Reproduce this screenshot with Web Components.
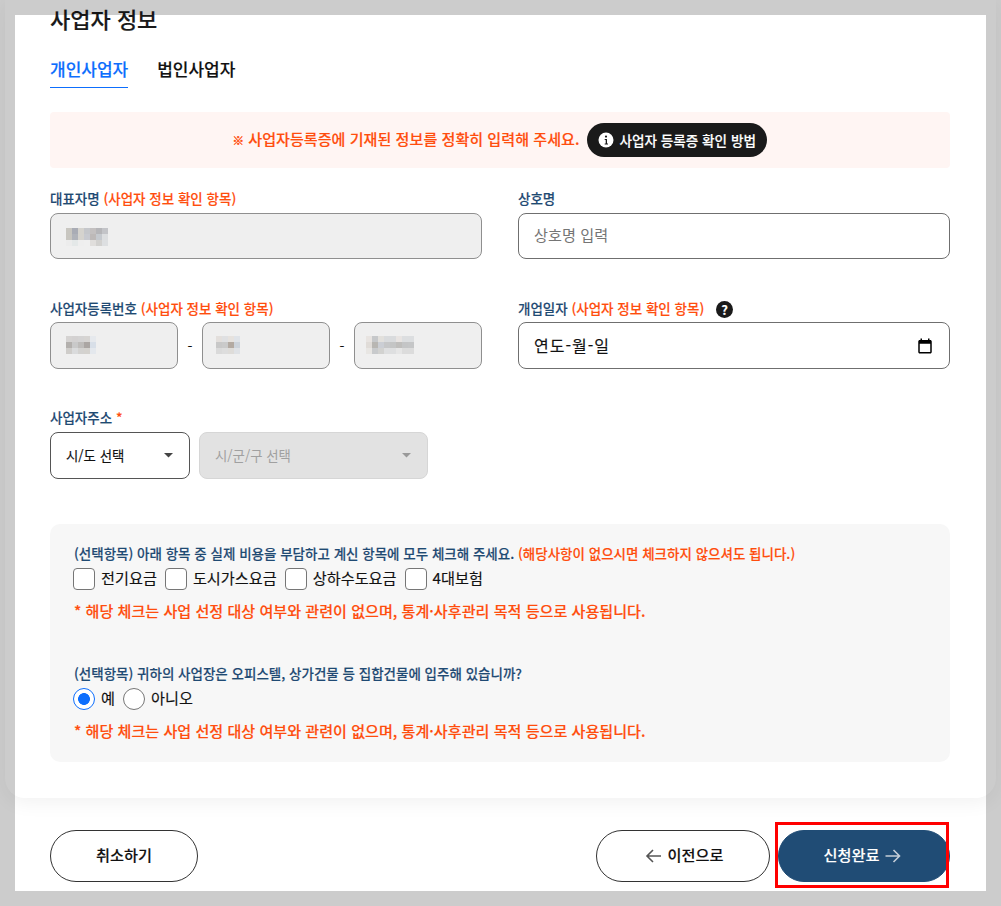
<!DOCTYPE html>
<html lang="ko">
<head>
<meta charset="utf-8">
<title>사업자 정보</title>
<style>
  html, body { margin: 0; background: #fff; }
  body {
    width: 1001px;
    height: 906px;
    overflow: hidden;
    font-family: "Noto Sans CJK KR", "Noto Sans", sans-serif;
    color: #111;
    -webkit-text-stroke: .15px currentColor;
  }
</style>
</head>
<body>
<page-shell>
  <form-card heading="사업자 정보">
    <tab-bar>
      <tab-item active>개인사업자</tab-item>
      <tab-item>법인사업자</tab-item>
    </tab-bar>

    <notice-banner><small-mark>※</small-mark> 사업자등록증에 기재된 정보를 정확히 입력해 주세요.</notice-banner>

    <form-row style="margin-top:21px">
      <form-field>
        <span slot="label">대표자명 <hint-text>(사업자 정보 확인 항목)</hint-text></span>
        <text-box disabled><pixel-blur style="margin-top:2px" rows="c8c6c0,a9acb5,d5d3ce,c5c7cb,c3c0c0,b5b5b8,c3c4c8|c8c6c0,b0b3ba,d5d3ce,c8cad0,bdb9b8,c5c9ce,dcdee0|ececec,e4e8e8,eeeeee,efefef,e0dedc,d2d1cf,dddfe1"></pixel-blur></text-box>
      </form-field>
      <form-field>
        <span slot="label">상호명</span>
        <text-box placeholder>상호명 입력</text-box>
      </form-field>
    </form-row>

    <form-row style="margin-top:40px;--label-h:23px;--control-h:47px">
      <form-field>
        <span slot="label">사업자등록번호 <hint-text>(사업자 정보 확인 항목)</hint-text></span>
        <biz-number>
          <text-box disabled><pixel-blur style="margin-bottom:1px" rows="d5d3d2,d3d1d1,d4d3d3,d6d4d2,e6e9ed|b3b0ad,c9c9c9,bebcba,aba6a3,d8dfe8|cfcdca,dadbdc,d3d2d0,d4d2ce,e4e8ed"></pixel-blur></text-box>
          <text-box disabled><pixel-blur style="margin:0 0 1px -2px" rows="e3dfdc,dfe0e2,e6e2de,dfe3e8|c8c8c8,cacaca,b3aaa2,ccd3db|dadada,dddddd,dedcd9,dfe2e6"></pixel-blur></text-box>
          <text-box disabled><pixel-blur style="margin:0 0 1px -4px" rows="e8e4e1,c6c8ca,e2e0dc,d9dbdd,d9dbdd,e8e4e2,dcdee0,dcdee0|e0dcd8,b8b6b2,cbced4,c6c7c8,c4c5c5,bfbebc,c4c5c6,c5c6c7|e8e6e3,c8cacc,d2d2d0,dedfe0,dedfe0,e6e6e6,dcdcdc,dcdcdc"></pixel-blur></text-box>
        </biz-number>
      </form-field>
      <form-field>
        <span slot="label">개업일자 <hint-text>(사업자 정보 확인 항목)</hint-text><help-icon></help-icon></span>
        <text-box calendar>연도-월-일</text-box>
      </form-field>
    </form-row>

    <form-field style="margin-top:39px;--control-h:47px">
      <span slot="label">사업자주소 <hint-text>*</hint-text></span>
      <select-row>
        <select-box style="width:140px">시/도 선택</select-box>
        <select-box style="width:229px" disabled>시/군/구 선택</select-box>
      </select-row>
    </form-field>

    <option-panel>
      <option-group note="* 해당 체크는 사업 선정 대상 여부와 관련이 없으며, 통계·사후관리 목적 등으로 사용됩니다.">
        <span slot="question">(선택항목) 아래 항목 중 실제 비용을 부담하고 계신 항목에 모두 체크해 주세요. <hint-text>(해당사항이 없으시면 체크하지 않으셔도 됩니다.)</hint-text></span>
        <check-item>전기요금</check-item>
        <check-item>도시가스요금</check-item>
        <check-item>상하수도요금</check-item>
        <check-item>4대보험</check-item>
      </option-group>
      <option-group style="margin-top:43px" note="* 해당 체크는 사업 선정 대상 여부와 관련이 없으며, 통계·사후관리 목적 등으로 사용됩니다.">
        <span slot="question">(선택항목) 귀하의 사업장은 오피스텔, 상가건물 등 집합건물에 입주해 있습니까?</span>
        <check-item radio checked>예</check-item>
        <check-item radio>아니오</check-item>
      </option-group>
    </option-panel>
  </form-card>

  <action-bar>
    <pill-button style="width:148px">취소하기</pill-button>
    <pill-button slot="right" style="width:174px" arrow="left">이전으로</pill-button>
    <pill-button slot="right" style="width:172px" arrow="right" primary marked>신청완료</pill-button>
  </action-bar>
</page-shell>
<screen-frame></screen-frame>

<script>
  const define = (name, css, html, setup) => {
    customElements.define(name, class extends HTMLElement {
      constructor() {
        super();
        const root = this.attachShadow({ mode: 'open' });
        root.innerHTML = `<style>${css}</style>${typeof html === 'function' ? html(this) : html}`;
      }
      connectedCallback() {
        if (setup) setup(this, this.shadowRoot);
      }
    });
  };

  const ORANGE = '#ff4d0d';
  const NAVY = '#1f4a73';

  define('page-shell', `:host { display: block; }`, `<slot></slot>`);

  // grey frame of the screenshot tool, lies over everything
  define('screen-frame', `
    :host {
      position: fixed;
      inset: 0;
      box-sizing: border-box;
      border: 15px solid rgba(0, 0, 0, .2);
      pointer-events: none;
      z-index: 10;
    }
  `, ``);

  define('form-card', `
    :host {
      display: block;
      margin: 0 5px;
      padding: 5px 46px 36px 45px;
      background: #fff;
      border-radius: 0 0 20px 20px;
      box-shadow: 0 4px 20px rgba(0, 0, 0, .06);
    }
    h2 { margin: 0; font-size: 22px; line-height: 26px; font-weight: 500; color: #1a1a1a; }
  `, (el) => `<h2>${el.getAttribute('heading')}</h2><slot></slot>`);

  define('tab-bar', `
    :host { display: flex; gap: 29px; margin-top: 21px; }
  `, `<slot></slot>`);

  define('tab-item', `
    :host {
      display: block;
      box-sizing: border-box;
      height: 36px;
      line-height: 34px;
      font-size: 17px;
      font-weight: 500;
      color: #111;
    }
    :host([active]) { color: #0d6efd; border-bottom: 1px solid #0d6efd; }
  `, `<slot></slot>`);

  define('notice-banner', `
    :host {
      display: flex;
      align-items: center;
      justify-content: center;
      gap: 8px;
      height: 56px;
      margin-top: 24px;
      background: #fff5f3;
      border-radius: 4px;
      color: ${ORANGE};
      font-size: 15.1px;
      font-weight: 500;
    }
    a {
      display: flex;
      align-items: center;
      gap: 5px;
      box-sizing: border-box;
      width: 180px;
      height: 34px;
      padding-left: 11px;
      border-radius: 17px;
      background: #1a1a1a;
      color: #fff;
      font-size: 13.6px;
    }
    svg { width: 16px; height: 16px; flex: none; }
    .text { white-space: pre; margin-bottom: 5px; }
  `, `<span class="text"><slot></slot></span>
    <a>
      <svg viewBox="0 0 16 16"><circle cx="8" cy="8" r="7.5" fill="#fff"/><circle cx="8" cy="4.6" r="1.1" fill="#1a1a1a"/><path d="M6.7 7h2.3v4.4h1v1H6.7v-1h1V8h-1z" fill="#1a1a1a"/></svg>
      <span>사업자 등록증 확인 방법</span>
    </a>`);

  define('small-mark', `:host { font-size: 11.5px; font-weight: 700; -webkit-text-stroke: .4px currentColor; }`, `<slot></slot>`);

  define('hint-text', `:host { color: ${ORANGE}; }`, `<slot></slot>`);

  define('help-icon', `
    :host {
      display: inline-flex;
      align-items: center;
      justify-content: center;
      position: relative;
      top: -1px;
      width: 17px;
      height: 17px;
      margin-left: 12px;
      vertical-align: middle;
      border-radius: 50%;
      background: #1a1a1a;
      color: #fff;
      font-size: 13px;
      font-weight: 700;
      line-height: 17px;
    }
  `, `?`);

  define('form-row', `
    :host { display: grid; grid-template-columns: 432px 432px; gap: 36px; }
  `, `<slot></slot>`);

  define('form-field', `
    :host { display: block; }
    .label {
      height: var(--label-h, 24px);
      font-size: 13.5px;
      line-height: 19px;
      font-weight: 500;
      color: ${NAVY};
      white-space: nowrap;
    }
  `, `<div class="label"><slot name="label"></slot></div><slot></slot>`);

  define('text-box', `
    :host {
      display: flex;
      align-items: center;
      justify-content: space-between;
      box-sizing: border-box;
      height: var(--control-h, 46px);
      padding: 0 15px;
      border: 1px solid #6f6f6f;
      border-radius: 8px;
      background: #fff;
      font-size: 16px;
      color: #111;
    }
    :host([disabled]) { background: #efefef; border-color: #8f8f8f; }
    :host([placeholder]) { color: #757575; font-size: 15.2px; -webkit-text-stroke: 0; }
    :host([placeholder]) span { margin-bottom: 4px; }
    :host([calendar]) span { margin-bottom: 2px; letter-spacing: 1px; }
    svg { display: none; width: 18px; height: 18px; }
    :host([calendar]) svg { display: block; }
  `, `<span><slot></slot></span>
    <svg viewBox="0 0 24 24"><path d="M19 4h-1V2h-2v2H8V2H6v2H5c-1.1 0-2 .9-2 2v14c0 1.1.9 2 2 2h14c1.1 0 2-.9 2-2V6c0-1.1-.9-2-2-2zm0 16H5V9h14v11z"/></svg>`);

  // mosaic over the masked personal data
  define('pixel-blur', `
    :host { display: block; }
    .row { display: flex; }
    i { display: block; width: 6px; height: 6px; }
  `, (el) => el.getAttribute('rows').split('|').map((r) =>
    `<div class="row">${r.split(',').map((c) => `<i style="background:#${c}"></i>`).join('')}</div>`
  ).join(''));

  define('biz-number', `
    :host { display: grid; grid-template-columns: 128px 128px 128px; gap: 24px; position: relative; }
    span {
      position: absolute;
      top: 50%;
      width: 24px;
      margin-top: -10px;
      line-height: 20px;
      text-align: center;
      font-size: 14px;
      color: #111;
    }
  `, `<slot></slot><span style="left:128px">-</span><span style="left:280px">-</span>`);

  define('select-row', `:host { display: flex; gap: 9px; }`, `<slot></slot>`);

  define('select-box', `
    :host {
      display: flex;
      align-items: center;
      justify-content: space-between;
      box-sizing: border-box;
      height: var(--control-h, 46px);
      padding: 0 16px 0 15px;
      border: 1px solid #555;
      border-radius: 8px;
      background: #fff;
      font-size: 13.4px;
      color: #111;
    }
    :host([disabled]) { background: #e2e2e2; border-color: #d6d6d6; color: #a0a0a0; -webkit-text-stroke: 0; }
    span { margin-bottom: 2px; }
    svg { width: 9px; height: 4.5px; fill: #444; }
    :host([disabled]) svg { fill: #999; }
  `, `<span><slot></slot></span><svg viewBox="0 0 10 5"><path d="M0 0h10L5 5z"/></svg>`);

  define('option-panel', `
    :host {
      display: block;
      margin-top: 45px;
      padding: 19px 24px 22px;
      background: #f7f7f7;
      border-radius: 10px;
    }
  `, `<slot></slot>`);

  define('option-group', `
    :host { display: block; }
    .question { font-size: 13.5px; line-height: 20px; font-weight: 500; color: ${NAVY}; white-space: nowrap; }
    .items { display: flex; gap: 8px; margin: 5px 0 0 -1px; }
    .note { margin-top: 10px; font-size: 15.1px; line-height: 20px; font-weight: 500; color: ${ORANGE}; white-space: nowrap; }
  `, (el) => `
    <div class="question"><slot name="question"></slot></div>
    <div class="items"><slot></slot></div>
    <div class="note">${el.getAttribute('note')}</div>`);

  define('check-item', `
    :host { display: flex; align-items: center; gap: 6px; height: 22px; font-size: 15.2px; line-height: 22px; color: #111; }
    span { margin-bottom: 4px; }
    input {
      appearance: none;
      box-sizing: border-box;
      flex: none;
      width: 22px;
      height: 22px;
      margin: 0;
      border: 1px solid #767676;
      border-radius: 4px;
      background: #fff;
    }
    input[type=radio] { border-radius: 50%; }
    input[type=radio]:checked {
      border: 1.5px solid #0d6efd;
      background: radial-gradient(circle, #0d6efd 0 5.6px, #fff 6.2px);
    }
  `, (el) => `<input type="${el.hasAttribute('radio') ? 'radio' : 'checkbox'}" ${el.hasAttribute('checked') ? 'checked' : ''}><span><slot></slot></span>`);

  define('action-bar', `
    :host { display: flex; justify-content: space-between; margin: 32px 51px 0 50px; }
    div { display: flex; gap: 8px; }
  `, `<slot></slot><div><slot name="right"></slot></div>`);

  const arrowIcon = (dir) => dir === 'left'
    ? `<svg viewBox="0 0 20 20"><path d="M18 10H4M10 4l-6 6 6 6" fill="none" stroke="currentColor" stroke-width="1.6"/></svg>`
    : `<svg viewBox="0 0 20 20"><path d="M1.500 10h14M9.500 4l6 6-6 6" fill="none" stroke="currentColor" stroke-width="1.6"/></svg>`;

  define('pill-button', `
    :host {
      display: flex;
      position: relative;
      align-items: center;
      justify-content: center;
      gap: 5px;
      box-sizing: border-box;
      height: 52px;
      border: 1px solid #333;
      border-radius: 26px;
      background: #fff;
      color: #111;
      font-size: 15.2px;
      font-weight: 500;
    }
    :host([primary]) { background: #204c75; border-color: #204c75; color: #fff; }
    span { margin-bottom: 4px; }
    svg { width: 20px; height: 20px; color: #555; }
    :host([primary]) svg { color: #c5ced8; }
    .mark {
      display: none;
      position: absolute;
      left: -4px;
      top: -9px;
      width: 174px;
      height: 66px;
      box-sizing: border-box;
      border: 3px solid #f00;
    }
    :host([marked]) .mark { display: block; }
  `, (el) => {
    const dir = el.getAttribute('arrow');
    const icon = dir ? arrowIcon(dir) : '';
    return `${dir === 'left' ? icon : ''}<span><slot></slot></span>${dir === 'right' ? icon : ''}<div class="mark"></div>`;
  });
</script>
</body>
</html>
